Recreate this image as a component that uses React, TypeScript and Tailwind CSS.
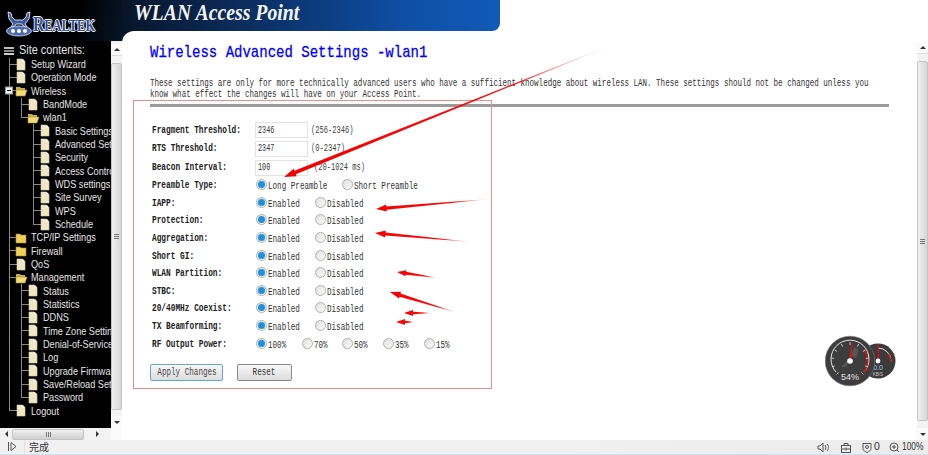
import React from "react";

type Node = { t: string; l: number; k: "doc" | "open" | "closed"; v: number[]; end?: number; minus?: boolean };

const V0 = 9, V1 = 21, V2 = 33;
const tree: Node[] = [
  { t: "Setup Wizard", l: 0, k: "doc", v: [V0] },
  { t: "Operation Mode", l: 0, k: "doc", v: [V0] },
  { t: "Wireless", l: 0, k: "open", v: [V0], minus: true },
  { t: "BandMode", l: 1, k: "doc", v: [V0, V1] },
  { t: "wlan1", l: 1, k: "open", v: [V0], end: V1 },
  { t: "Basic Settings", l: 2, k: "doc", v: [V0, V2] },
  { t: "Advanced Settings", l: 2, k: "doc", v: [V0, V2] },
  { t: "Security", l: 2, k: "doc", v: [V0, V2] },
  { t: "Access Control", l: 2, k: "doc", v: [V0, V2] },
  { t: "WDS settings", l: 2, k: "doc", v: [V0, V2] },
  { t: "Site Survey", l: 2, k: "doc", v: [V0, V2] },
  { t: "WPS", l: 2, k: "doc", v: [V0, V2] },
  { t: "Schedule", l: 2, k: "doc", v: [V0], end: V2 },
  { t: "TCP/IP Settings", l: 0, k: "closed", v: [V0] },
  { t: "Firewall", l: 0, k: "closed", v: [V0] },
  { t: "QoS", l: 0, k: "doc", v: [V0] },
  { t: "Management", l: 0, k: "open", v: [V0] },
  { t: "Status", l: 1, k: "doc", v: [V0, V1] },
  { t: "Statistics", l: 1, k: "doc", v: [V0, V1] },
  { t: "DDNS", l: 1, k: "doc", v: [V0, V1] },
  { t: "Time Zone Setting", l: 1, k: "doc", v: [V0, V1] },
  { t: "Denial-of-Service", l: 1, k: "doc", v: [V0, V1] },
  { t: "Log", l: 1, k: "doc", v: [V0, V1] },
  { t: "Upgrade Firmware", l: 1, k: "doc", v: [V0, V1] },
  { t: "Save/Reload Settings", l: 1, k: "doc", v: [V0, V1] },
  { t: "Password", l: 1, k: "doc", v: [V0], end: V1 },
  { t: "Logout", l: 0, k: "doc", v: [], end: V0 },
];

function TreeGlyph({ n }: { n: Node }) {
  const ix = 17 + 12 * n.l;
  const w = ix + 13.5 + 0.4 * n.l;
  const hx = n.l === 0 ? V0 : n.l === 1 ? V1 : V2;
  return (
    <svg width={w} height={14} className="shrink-0 overflow-visible">
      {n.v.map((x) => (
        <line key={x} x1={x + 0.5} x2={x + 0.5} y1={0} y2={14} stroke="#8a8a8a" />
      ))}
      {n.end !== undefined && <line x1={n.end + 0.5} x2={n.end + 0.5} y1={0} y2={7} stroke="#8a8a8a" />}
      <line x1={hx} x2={ix} y1={6.5} y2={6.5} stroke="#8a8a8a" />
      {n.k === "doc" && (
        <g>
          <path d="M17 1h5.5l2.5 2.5V12h-8z" transform={`translate(${12 * n.l} 0)`} fill="#efe6c4" stroke="#d8d2b8" strokeWidth="0.6" />
          <path d="M22.5 1v2.5H25z" transform={`translate(${12 * n.l} 0)`} fill="#fff" />
        </g>
      )}
      {n.k === "closed" && (
        <g transform={`translate(${12 * n.l} 0)`}>
          <path d="M16 3h4l1 1h5v8H16z" fill="#f0cf5a" stroke="#a88d2e" strokeWidth="0.6" />
        </g>
      )}
      {n.k === "open" && (
        <g transform={`translate(${12 * n.l} 0)`}>
          <path d="M16 3h4l1 1h4v3H16z" fill="#c9ad46" />
          <path d="M16 6h11l-2 6H16z" fill="#f5dc78" stroke="#a88d2e" strokeWidth="0.6" />
        </g>
      )}
      {n.minus && (
        <g>
          <rect x="5.500" y="3" width="7" height="7" fill="#eee" stroke="#999" />
          <line x1="7" x2="11" y1="6.500" y2="6.500" stroke="#111" />
        </g>
      )}
    </svg>
  );
}

function Sidebar() {
  return (
    <div className="flex h-[387px] w-full bg-black">
      <div className="w-[111px] overflow-hidden text-[#e4e4e4]">
        <div className="flex h-[17px] items-end">
          <svg width="19" height="14" className="shrink-0">
            <rect x="4" y="3" width="10" height="2" fill="#bbb" />
            <rect x="4" y="6" width="10" height="2" fill="#888" />
            <rect x="4" y="9" width="10" height="2" fill="#ccc" />
          </svg>
          <span className="origin-left scale-x-[0.87] whitespace-nowrap text-[12.5px] leading-[15px]">Site contents:</span>
        </div>
        {tree.map((n) => (
          <div key={n.t} className="flex h-[13.33px] items-center whitespace-nowrap text-[11px]">
            <TreeGlyph n={n} />
            <span className="origin-left scale-x-[0.83] leading-[13px]">{n.t}</span>
          </div>
        ))}
      </div>
      <VScroll arrowTop="mt-[3px]" thumb="h-[347px]" />
    </div>
  );
}

function VScroll({ arrowTop, thumb }: { arrowTop: string; thumb: string }) {
  return (
    <div className="flex h-full w-[11px] shrink-0 flex-col items-center justify-between bg-[#f3f3f3]">
      <div className={`flex h-[12px] w-full items-center justify-center border-b border-[#dcdcdc] bg-[#fafafa] ${arrowTop}`}>
        <div className="h-0 w-0 border-x-[3px] border-b-[3px] border-x-transparent border-b-[#333]" />
      </div>
      <div className={`flex w-full flex-col items-center justify-center rounded-[2px] border border-[#c4c4c4] bg-gradient-to-r from-[#f0f0f0] to-[#d6d6d6] ${thumb}`}>
        <div className="h-[1px] w-[5px] bg-[#777]" />
        <div className="mt-[1px] h-[1px] w-[5px] bg-[#777]" />
        <div className="mt-[1px] h-[1px] w-[5px] bg-[#777]" />
      </div>
      <div className="flex h-[12px] w-full items-center justify-center bg-[#fafafa]">
        <div className="h-0 w-0 border-x-[3px] border-t-[3px] border-x-transparent border-t-[#333]" />
      </div>
    </div>
  );
}

function HScroll() {
  return (
    <div className="flex h-[12px] w-full bg-[#fbfbfb]">
      <div className="flex w-[111px] items-center bg-[#f3f3f3]">
        <div className="flex w-[12px] justify-center">
          <div className="h-0 w-0 border-y-[3px] border-r-[3px] border-y-transparent border-r-[#333]" />
        </div>
        <div className="flex h-[11px] w-[72px] items-center justify-center gap-[1px] rounded-[2px] border border-[#c4c4c4] bg-gradient-to-b from-[#f0f0f0] to-[#cfcfcf]">
          <div className="h-[5px] w-[1px] bg-[#777]" />
          <div className="h-[5px] w-[1px] bg-[#777]" />
          <div className="h-[5px] w-[1px] bg-[#777]" />
        </div>
        <div className="flex flex-1 justify-center">
          <div className="h-0 w-0 border-y-[3px] border-l-[3px] border-y-transparent border-l-[#333]" />
        </div>
      </div>
    </div>
  );
}

function Logo() {
  return (
    <div className="flex h-[41px] w-full items-center bg-[linear-gradient(100deg,#000_62%,#071528_100%)] pl-[5px] pt-[7px]">
      <svg width="28" height="26" viewBox="0 0 28 26" className="shrink-0">
        <path d="M3 1l3 1 1 4 3 3h8l3-3 1-4 3-1-1 7-4 5 2 3h-3l-2-3h-6l-2 3H6l2-3-4-5z" fill="#3c5aa8" stroke="#fff" strokeWidth="0.8" />
        <ellipse cx="14" cy="20" rx="12.500" ry="5" fill="#4d6bb5" stroke="#dfe6f5" strokeWidth="0.8" />
        <circle cx="8" cy="20" r="2" fill="#fff" />
        <circle cx="14" cy="20" r="2" fill="#fff" />
        <circle cx="20" cy="20" r="2" fill="#fff" />
      </svg>
      <span className="origin-left scale-x-[0.78] whitespace-nowrap font-['Liberation_Serif'] text-[20px] font-bold leading-none text-[#2d4e9e] [text-shadow:1px_0_0_#fff,-1px_0_0_#fff,0_1px_0_#fff,0_-1px_0_#fff]">
        R<span className="text-[16px]">EALTEK</span>
      </span>
    </div>
  );
}

const MONO = "font-['Liberation_Mono',monospace]";

function Radio({ on }: { on?: boolean }) {
  return (
    <span className="mr-[1px] flex h-[11px] w-[11px] shrink-0 -translate-y-[1px] items-center justify-center rounded-full border border-[#b0b0b0] bg-gradient-to-br from-[#e0e0e0] to-[#fafafa]">
      {on && <span className="h-[7px] w-[7px] rounded-full bg-[#1e90e0]" />}
    </span>
  );
}

function Squeezed({ children, cls }: { children: React.ReactNode; cls: string }) {
  return <span className={`inline-block whitespace-nowrap ${cls}`}>{children}</span>;
}

function Opt({ on, label, w }: { on?: boolean; label: string; w: string }) {
  return (
    <div className={`flex items-center ${w}`}>
      <Radio on={on} />
      <Squeezed cls="origin-left translate-y-[1px] scale-x-[0.76] text-[#333]">{label}</Squeezed>
    </div>
  );
}

function Row({ label, h, children }: { label: string; h: string; children: React.ReactNode }) {
  return (
    <div className={`flex items-center pl-[2px] ${h}`}>
      <div className="w-[103px] shrink-0">
        <Squeezed cls="origin-left scale-x-[0.78] font-bold text-[#222]">{label}</Squeezed>
      </div>
      {children}
    </div>
  );
}

function TextRow({ label, value, hint, gap }: { label: string; value: string; hint: string; gap: string }) {
  return (
    <Row label={label} h="h-[18.67px]">
      <div className="flex h-[16px] w-[53px] shrink-0 items-center border border-[#e2e2e2] pl-[2px]">
        <Squeezed cls="origin-left scale-x-[0.68] text-[#333]">{value}</Squeezed>
      </div>
      <div className={gap}>
        <Squeezed cls="origin-left scale-x-[0.71] text-[#444]">{hint}</Squeezed>
      </div>
    </Row>
  );
}

function EnDis({ label }: { label: string }) {
  return (
    <Row label={label} h="h-[17.6px]">
      <div className="flex pl-[1px]">
        <Opt on label="Enabled" w="w-[59px]" />
        <Opt label="Disabled" w="w-[60px]" />
      </div>
    </Row>
  );
}

function Form() {
  return (
    <div className={`${MONO} text-[10px]`}>
      <TextRow label="Fragment Threshold:" value="2346" hint="(256-2346)" gap="ml-[3px]" />
      <TextRow label="RTS Threshold:" value="2347" hint="(0-2347)" gap="ml-[3px]" />
      <TextRow label="Beacon Interval:" value="100" hint="(20-1024 ms)" gap="ml-[6px]" />
      <Row label="Preamble Type:" h="h-[17.6px]">
        <div className="flex pl-[1px]">
          <Opt on label="Long Preamble" w="w-[86px]" />
          <Opt label="Short Preamble" w="w-[90px]" />
        </div>
      </Row>
      {["IAPP:", "Protection:", "Aggregation:", "Short GI:", "WLAN Partition:", "STBC:", "20/40MHz Coexist:", "TX Beamforming:"].map((l) => (
        <EnDis key={l} label={l} />
      ))}
      <Row label="RF Output Power:" h="h-[17.6px]">
        <div className="flex pl-[1px]">
          <Opt on label="100%" w="w-[46px]" />
          <Opt label="70%" w="w-[40px]" />
          <Opt label="50%" w="w-[41px]" />
          <Opt label="35%" w="w-[41px]" />
          <Opt label="15%" w="w-[30px]" />
        </div>
      </Row>
      <div className="mt-[11px] flex gap-[14px]">
        <button className="flex h-[17px] w-[73px] items-center justify-center rounded-[2px] border border-[#5fa9c9] bg-gradient-to-b from-[#f8f8f8] to-[#dcdcdc] text-[#444]">
          <Squeezed cls="scale-x-[0.76]">Apply Changes</Squeezed>
        </button>
        <button className="flex h-[17px] w-[55px] items-center justify-center rounded-[2px] border border-[#8a8a8a] bg-gradient-to-b from-[#f8f8f8] to-[#dcdcdc] text-[#333]">
          <Squeezed cls="scale-x-[0.76]">Reset</Squeezed>
        </button>
      </div>
    </div>
  );
}

function Arrow({ x1, y1, x2, y2, w, id, head = 6 }: { x1: number; y1: number; x2: number; y2: number; w: number; id: string; head?: number }) {
  const dx = x2 - x1, dy = y2 - y1;
  const L = Math.hypot(dx, dy);
  const ux = dx / L, uy = dy / L;
  const nx = -uy, ny = ux;
  const bx = x2 - ux * head * 1.5, by = y2 - uy * head * 1.5;
  const p = (a: number, b: number, o: number) => `${a + nx * o},${b + ny * o}`;
  return (
    <g>
      <defs>
        <linearGradient id={id} gradientUnits="userSpaceOnUse" x1={x1} y1={y1} x2={x2} y2={y2}>
          <stop offset="0" stopColor="#ff0000" stopOpacity="0" />
          <stop offset="0.3" stopColor="#ff0000" stopOpacity="0.95" />
          <stop offset="1" stopColor="#f00000" />
        </linearGradient>
      </defs>
      <polygon points={`${x1},${y1} ${p(bx, by, w / 2)} ${p(bx, by, head / 2)} ${x2},${y2} ${p(bx, by, -head / 2)} ${p(bx, by, -w / 2)}`} fill={`url(#${id})`} />
    </g>
  );
}

function Overlays() {
  return (
    <svg width="928" height="455" className="pointer-events-none absolute left-0 top-0">
      <rect x="133.500" y="100.500" width="358" height="288" fill="none" stroke="#f58a8a" />
      <Arrow id="a1" x1={614} y1={44} x2={284} y2={177} w={3.8} head={8} />
      <Arrow id="a2" x1={490} y1={199} x2={376} y2={209} w={3.2} head={7} />
      <Arrow id="a3" x1={472} y1={242} x2={375} y2={233} w={3.2} head={7} />
      <Arrow id="a4" x1={438} y1={278} x2={397} y2={272} w={3} head={6} />
      <Arrow id="a5" x1={458} y1={313} x2={390} y2={292} w={3.2} head={7} />
      <Arrow id="a6" x1={432} y1={313} x2={404} y2={313} w={2.6} head={6} />
      <Arrow id="a7" x1={415} y1={322} x2={396} y2={322} w={2.4} head={6} />
    </svg>
  );
}

function Gauge() {
  const ticks = Array.from({ length: 11 }, (_, i) => -135 + i * 27);
  return (
    <svg width="72" height="56" viewBox="0 0 72 56" className="pointer-events-none absolute left-[825px] top-[335px]">
      <circle cx="53" cy="26" r="17.500" fill="#3b3b3b" />
      <path d="M53 13a13 13 0 0 1 13 13" fill="none" stroke="#ddd" strokeWidth="1" />
      <path d="M63 19a13 13 0 0 1 3 8" fill="none" stroke="#e01010" strokeWidth="1.4" />
      <path d="M52.300 26l.5-17h.8l.5 17z" fill="#e01010" />
      <circle cx="53" cy="26" r="2.400" fill="#fff" />
      <text x="53" y="35" textAnchor="middle" fontSize="7" fill="#9fd0f0" fontFamily="Liberation Sans">0.0</text>
      <text x="53" y="40.500" textAnchor="middle" fontSize="4.500" fill="#ccc" fontFamily="Liberation Sans">KB/S</text>
      <circle cx="25" cy="26" r="24.800" fill="#3d3d3d" stroke="#777" strokeWidth="0.6" />
      <path d="M29 12l-3 9 5 2 3-8zM22 26l-6 6 4 0 4-4z" fill="#555" />
      <path d="M11 37A19 19 0 1 1 39 37" fill="none" stroke="#e8e8e8" strokeWidth="1" />
      <path d="M39 15A19 19 0 0 1 39 37" fill="none" stroke="#e01010" strokeWidth="1.600" />
      {ticks.map((a) => (
        <line key={a} x1="25" x2="25" y1="7" y2="10" stroke="#ddd" strokeWidth="0.8" transform={`rotate(${a} 25 26)`} />
      ))}
      <path d="M23.800 26l3-18 .8 .2-1.200 18z" fill="#e01010" />
      <circle cx="25" cy="26" r="2.800" fill="#fff" />
      <text x="25" y="45" textAnchor="middle" fontSize="9" fill="#e6e6e6" fontFamily="Liberation Sans">54%</text>
    </svg>
  );
}

function StatusBar() {
  const c = "#555";
  return (
    <div className="flex h-[15px] w-full items-center border-b border-[#cfe3f2] bg-gradient-to-r from-[#f1f1f1] via-[#f1f1f1] to-[#ececec] text-[#333]">
      <svg width="24" height="14" className="shrink-0">
        <line x1="8.500" x2="8.500" y1="2" y2="11" stroke={c} />
        <path d="M11 2.500l5 4-5 4z" fill="none" stroke={c} />
      </svg>
      <div className="h-full w-[1px] bg-[#e0e0e0]" />
      <span className="ml-[4px] font-['Noto_Sans_CJK_SC',sans-serif] text-[10px] leading-none">完成</span>
      <div className="flex-1" />
      <svg width="12" height="13" className="mr-[11px] shrink-0" fill="none" stroke={c}>
        <path d="M1 5h2l3-3v9L3 8H1z" />
        <path d="M8 4c1 1 1 4 0 5M10 3c2 2 2 5 0 7" />
      </svg>
      <svg width="12" height="13" className="mr-[10px] shrink-0" fill="none" stroke={c}>
        <rect x="1.500" y="4.500" width="9" height="7" />
        <path d="M4 4.500v-2h4v2M1.500 8h9M6 6.500v3" />
      </svg>
      <svg width="10" height="13" className="mr-[2px] shrink-0" fill="none" stroke={c}>
        <path d="M1 2.500h8v5c0 2-2 3-4 4-2-1-4-2-4-4z" />
        <circle cx="5" cy="6" r="1.500" />
      </svg>
      <span className="mr-[9px] w-[6px] font-['Liberation_Sans'] text-[10.5px]">0</span>
      <svg width="11" height="13" className="mr-[2px] shrink-0" fill="none" stroke={c}>
        <circle cx="5" cy="6" r="4" />
        <path d="M3 6h4M5 4v4M8 9l2 2" />
      </svg>
      <span className="mr-[5px] w-[21px] font-['Liberation_Sans'] text-[10.5px]">
        <Squeezed cls="origin-left scale-x-[0.8]">100%</Squeezed>
      </span>
    </div>
  );
}

export default function App() {
  return (
    <div className="relative flex h-[455px] w-[928px] flex-col overflow-hidden bg-white font-['Liberation_Sans',sans-serif]">
      <div className="flex h-[440px] w-full">
        <div className="flex w-[122px] shrink-0 flex-col">
          <Logo />
          <Sidebar />
          <HScroll />
        </div>
        <div className="flex min-w-0 flex-1 flex-col">
          <div className="h-[31px] w-[378px] rounded-br-[8px] bg-[linear-gradient(90deg,#071528_0%,#0b2f63_35%,#0f4fa6_75%,#115ab8_100%)] pl-[12px] font-['Liberation_Serif',serif] text-[24px] font-bold italic leading-[25px] text-[#f4f4f4]">
            <Squeezed cls="origin-left scale-x-[0.825]">WLAN Access Point</Squeezed>
          </div>
          <div className="flex min-h-0 flex-1 bg-[linear-gradient(#071528,#071528)] bg-[length:14px_10px] bg-no-repeat">
            <div className="min-w-0 flex-1 overflow-hidden rounded-tl-[12px] bg-white pl-[28px]">
              <div className={`${MONO} pt-[13px] text-[17px] leading-[18px] text-[#0000ff] [-webkit-text-stroke:0.3px_#0000ff]`}>
                <Squeezed cls="origin-left scale-x-[0.824]">Wireless Advanced Settings -wlan1</Squeezed>
              </div>
              <p className={`${MONO} mt-[16px] w-[740px] text-[10px] leading-[11px] text-[#333]`}>
                <Squeezed cls="origin-left scale-x-[0.753]">These settings are only for more technically advanced users who have a sufficient knowledge about wireless LAN. These settings should not be changed unless you</Squeezed>
                <Squeezed cls="block origin-left scale-x-[0.753]">know what effect the changes will have on your Access Point.</Squeezed>
              </p>
              <div className="mt-[4px] h-[3px] w-[739px] bg-[#9a9a9a]" />
              <div className="pt-[14px]">
                <Form />
              </div>
            </div>
            <div className="flex w-[11px] shrink-0 flex-col pt-[11px]">
              <VScroll arrowTop="" thumb="h-[360px]" />
            </div>
          </div>
        </div>
      </div>
      <StatusBar />
      <Overlays />
      <Gauge />
    </div>
  );
}
